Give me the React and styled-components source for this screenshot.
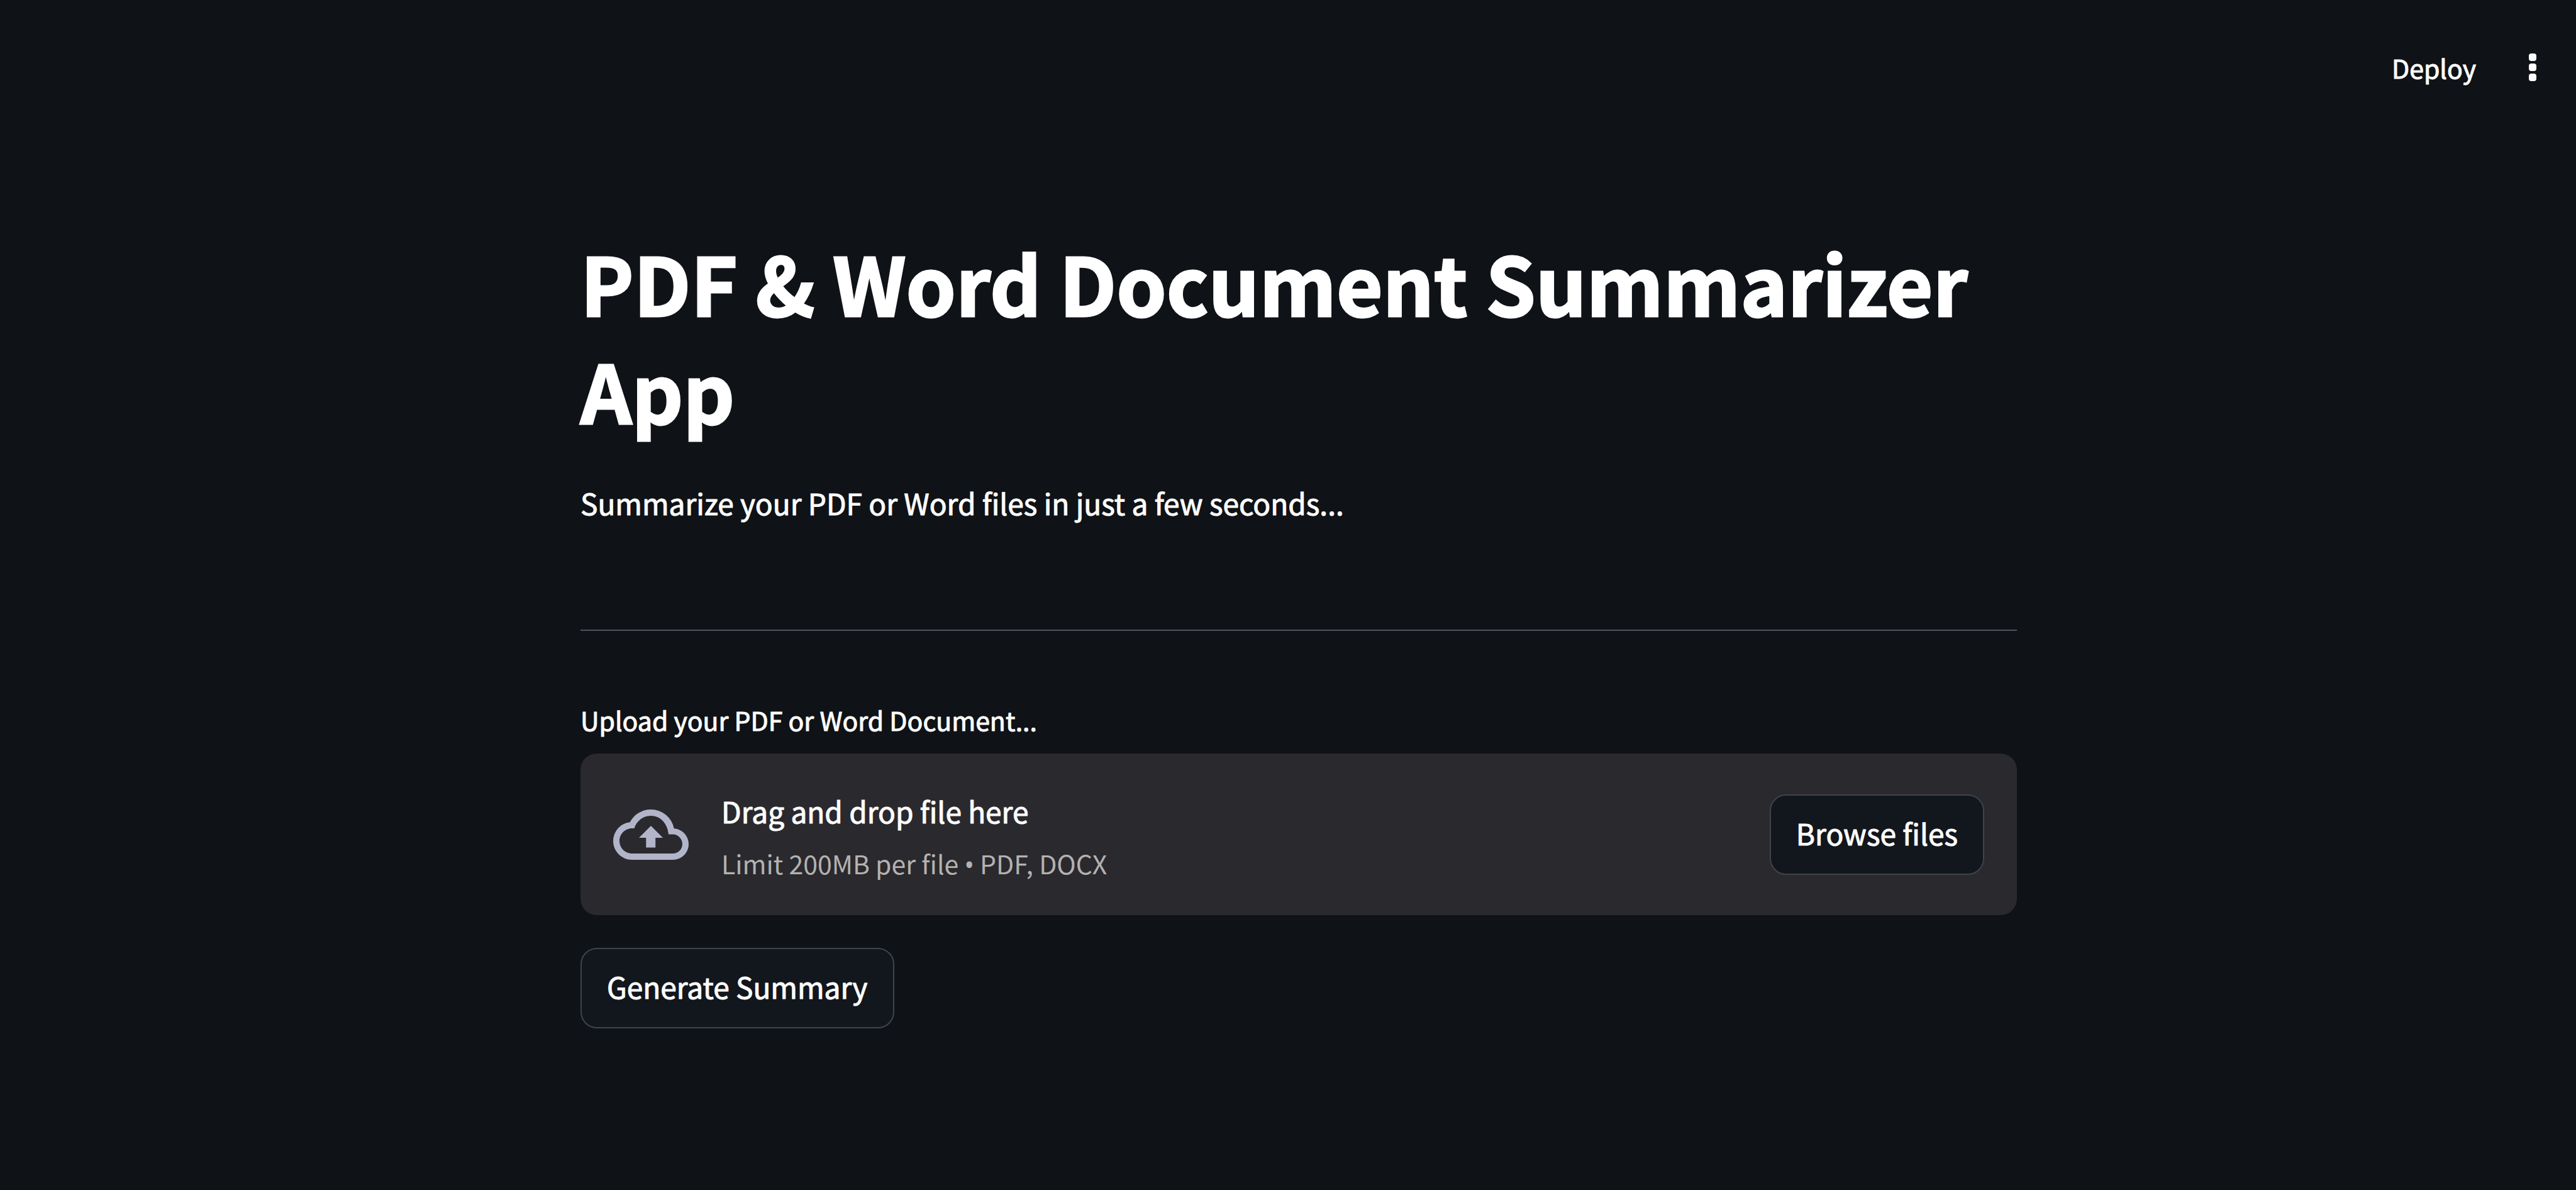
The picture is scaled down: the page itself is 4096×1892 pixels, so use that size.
import React, { useRef } from "react";
import styled, { createGlobalStyle } from "styled-components";

const color = {
  page: "#0f1216",
  panel: "#2a292e",
  button: "#12161d",
  border: "#3f434a",
  rule: "#50545b",
  text: "#fcfcfa",
  muted: "#b4b2b0",
  icon: "#b2b5c9",
};

const GlobalStyle = createGlobalStyle`
  *, *::before, *::after { box-sizing: border-box; }
  body {
    margin: 0;
    background: ${color.page};
    color: ${color.text};
    font-family: "Noto Sans CJK SC", "Noto Sans CJK JP", sans-serif;
    font-size: 46px;
    font-weight: 400;
    line-height: 84px;
    -webkit-text-stroke: 1px currentColor;
  }
`;

const Page = styled.div`
  display: flex;
  flex-direction: column;
  min-height: 100vh;
`;

const Header = styled.header`
  display: flex;
  align-items: center;
  justify-content: flex-end;
  gap: 84px;
  height: 214px;
  padding: 0 63px;
`;

const PlainButton = styled.button`
  display: flex;
  align-items: center;
  padding: 0;
  border: 0;
  background: none;
  color: inherit;
  font: inherit;
  font-size: 41px;
  cursor: pointer;
`;

const Main = styled.main`
  display: flex;
  justify-content: center;
  padding: 149px 0 160px 34px;
`;

const Column = styled.div`
  width: 100%;
  max-width: 2284px;
`;

const Title = styled.h1`
  margin: 0 0 52px;
  color: #fff;
  font-size: 127px;
  font-weight: 700;
  line-height: 171px;
  -webkit-text-stroke: 3px currentColor;
`;

const Lead = styled.p`
  margin: 0;
`;

const Divider = styled.hr`
  height: 2px;
  margin: 160px 0 108px;
  border: 0;
  background: ${color.rule};
`;

const FieldLabel = styled.label`
  display: block;
  margin-bottom: 21px;
  font-size: 41px;
  line-height: 66px;
`;

const Dropzone = styled.section`
  display: flex;
  align-items: center;
  gap: 52px;
  min-height: 257px;
  margin-bottom: 52px;
  padding: 48px 52px;
  border-radius: 26px;
  background: ${color.panel};
`;

const CloudIcon = styled.svg`
  flex: none;
  width: 120px;
  height: 120px;
  fill: ${color.icon};
`;

const Instructions = styled.div`
  display: flex;
  flex: 1;
  flex-direction: column;
  gap: 8px;
`;

const Hint = styled.small`
  color: ${color.muted};
  font-size: 41px;
  line-height: 66px;
  -webkit-text-stroke: 0;
`;

const Bullet = styled.span`
  font-family: "Noto Sans", sans-serif;
`;

const Button = styled.button`
  flex: none;
  padding: 17px 40px 23px;
  border: 2px solid ${color.border};
  border-radius: 26px;
  background: ${color.button};
  color: inherit;
  font: inherit;
  cursor: pointer;
`;

export default function App() {
  const fileInput = useRef(null);
  return (
    <Page>
      <GlobalStyle />
      <Header>
        <PlainButton type="button">Deploy</PlainButton>
        <PlainButton type="button" aria-label="Main menu">
          <svg width="12" height="44" viewBox="0 0 12 44" fill={color.text} aria-hidden="true">
            <rect width="12" height="12" rx="4" />
            <rect y="16" width="12" height="12" rx="4" />
            <rect y="32" width="12" height="12" rx="4" />
          </svg>
        </PlainButton>
      </Header>
      <Main>
        <Column>
          <Title>PDF &amp; Word Document Summarizer App</Title>
          <Lead>Summarize your PDF or Word files in just a few seconds...</Lead>
          <Divider />
          <FieldLabel htmlFor="document">Upload your PDF or Word Document...</FieldLabel>
          <Dropzone>
            <input ref={fileInput} id="document" type="file" accept=".pdf,.docx" hidden />
            <CloudIcon viewBox="0 0 24 24" aria-hidden="true">
              <path d="M19.35 10.04A7.49 7.49 0 0 0 12 4C9.11 4 6.6 5.64 5.35 8.04A5.994 5.994 0 0 0 0 14c0 3.31 2.69 6 6 6h13c2.76 0 5-2.24 5-5 0-2.64-2.05-4.78-4.65-4.96zM19 18H6c-2.21 0-4-1.79-4-4s1.79-4 4-4h.71C7.37 7.69 9.48 6 12 6c2.9 0 5.25 2.3 5.6 5.9H19c1.66 0 3 1.44 3 3.1s-1.34 3-3 3z" />
              <path d="M8.2 13h2.25v3.1h3V13h2.35L12 9.2z" />
            </CloudIcon>
            <Instructions>
              <span>Drag and drop file here</span>
              <Hint>Limit 200MB per file <Bullet>•</Bullet> PDF, DOCX</Hint>
            </Instructions>
            <Button type="button" onClick={() => fileInput.current.click()}>Browse files</Button>
          </Dropzone>
          <Button type="button">Generate Summary</Button>
        </Column>
      </Main>
    </Page>
  );
}
